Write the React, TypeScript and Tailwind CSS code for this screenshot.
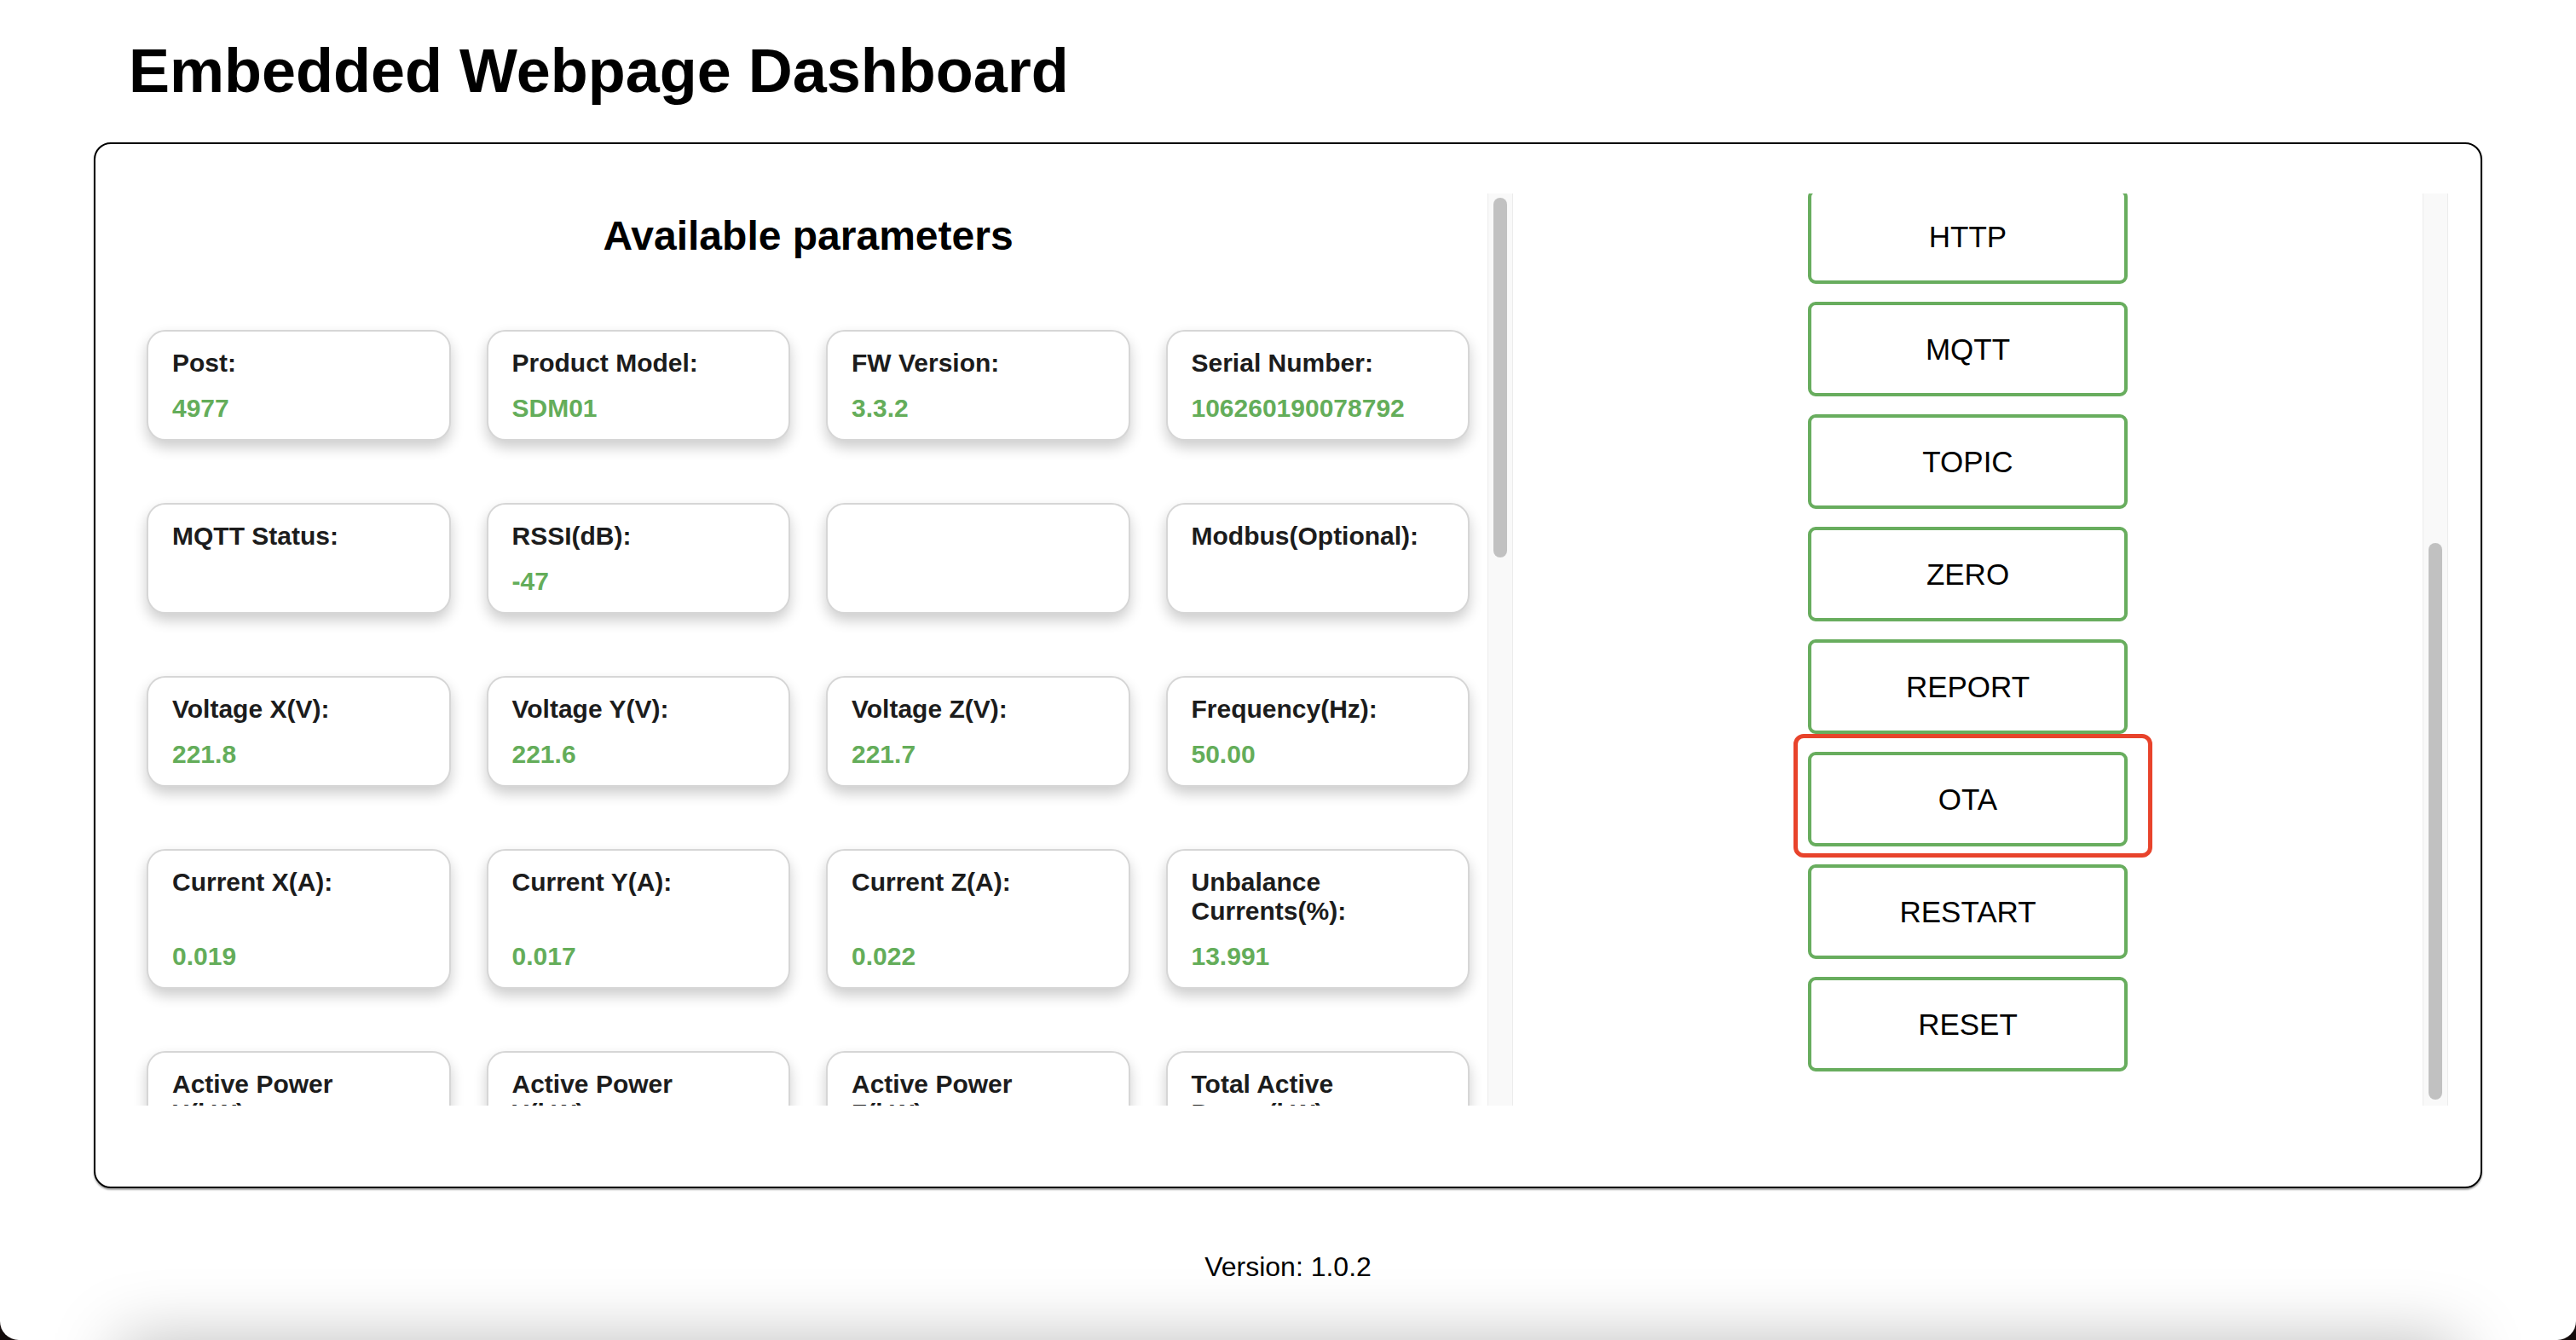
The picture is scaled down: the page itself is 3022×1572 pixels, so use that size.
import React from "react";

type Param = { label: string; value: string };

const params: Param[] = [
  { label: "Post:", value: "4977" },
  { label: "Product Model:", value: "SDM01" },
  { label: "FW Version:", value: "3.3.2" },
  { label: "Serial Number:", value: "106260190078792" },
  { label: "MQTT Status:", value: "" },
  { label: "RSSI(dB):", value: "-47" },
  { label: "", value: "" },
  { label: "Modbus(Optional):", value: "" },
  { label: "Voltage X(V):", value: "221.8" },
  { label: "Voltage Y(V):", value: "221.6" },
  { label: "Voltage Z(V):", value: "221.7" },
  { label: "Frequency(Hz):", value: "50.00" },
  { label: "Current X(A):", value: "0.019" },
  { label: "Current Y(A):", value: "0.017" },
  { label: "Current Z(A):", value: "0.022" },
  { label: "Unbalance Currents(%):", value: "13.991" },
  { label: "Active Power X(kW):", value: "0.000" },
  { label: "Active Power Y(kW):", value: "0.000" },
  { label: "Active Power Z(kW):", value: "0.000" },
  { label: "Total Active Power(kW):", value: "0.000" },
];

const buttons = ["HTTP", "MQTT", "TOPIC", "ZERO", "REPORT", "OTA", "RESTART", "RESET"];

function Card({ p }: { p: Param }) {
  return (
    <div className="flex flex-col justify-between rounded-[22px] border-2 border-[#d6d6d6] bg-white pb-[19px] pl-[28px] pr-[36px] pt-[20px] shadow-[0_8px_16px_rgba(0,0,0,0.2)]">
      <div className="text-[30px] font-bold leading-[34px] text-[#1c1c1c]">{p.label || "\u00a0"}</div>
      <div className="mt-[19px] text-[30px] font-bold leading-[34px] text-[#64ad5a]">{p.value || "\u00a0"}</div>
    </div>
  );
}

function Track({ top, height }: { top: number; height: number }) {
  return (
    <div className="h-full w-[30px] shrink-0 border-x border-[#ececec] bg-[#f9f9f9]">
      <div className="mx-auto w-[16px] rounded-full bg-[#c1c1c1]" style={{ marginTop: top, height }} />
    </div>
  );
}

function ActionButton({ label }: { label: string }) {
  const highlight = label === "OTA";
  return (
    <div className="relative shrink-0">
      <button className="flex h-[111px] w-[375px] items-center justify-center rounded-[9px] border-4 border-[#68ad5e] bg-white text-[35px] leading-none text-black">
        {label}
      </button>
      {highlight && (
        <div className="pointer-events-none absolute bottom-[-13px] left-[-17px] right-[-29px] top-[-21px] rounded-[12px] border-[5px] border-[#e8432b]" />
      )}
    </div>
  );
}

export default function App() {
  return (
    <div className="h-[1572px] w-full bg-[#140c0c]">
      <div className="relative h-full overflow-hidden rounded-b-[22px] bg-white font-['Liberation_Sans',Arial,sans-serif] text-black">
        <h1 className="pl-[151px] pt-[42px] text-[72px] font-bold leading-[83px]">Embedded Webpage Dashboard</h1>

        <div className="mx-[110px] mt-[42px] h-[1227px] rounded-[20px] border-2 border-black pl-[39px] pr-[38px] pt-[58px] shadow-[0_2px_2px_rgba(0,0,0,0.35)]">
          <div className="flex h-[1070px]">
            <div className="flex h-full w-[1624px] shrink-0">
              <div className="h-full flex-1 overflow-hidden px-[21px] pt-[22px]">
                <h2 className="mb-[83px] text-center text-[48px] font-bold leading-[55px]">Available parameters</h2>
                <div className="grid grid-cols-4 gap-x-[42px] gap-y-[73px] pb-[40px]">
                  {params.map((p, i) => (
                    <Card key={i} p={p} />
                  ))}
                </div>
              </div>
              <Track top={5} height={422} />
            </div>

            <div className="flex h-full flex-1">
              <div className="flex h-full flex-1 flex-col items-center justify-end gap-[21px] overflow-hidden pb-[40px]">
                {buttons.map((b) => (
                  <ActionButton key={b} label={b} />
                ))}
              </div>
              <Track top={410} height={653} />
            </div>
          </div>
        </div>

        <p className="mt-[74px] text-center text-[32px] leading-[37px]">Version: 1.0.2</p>

        <div className="pointer-events-none absolute left-[140px] right-[140px] top-full h-[100px] shadow-[0_0_80px_rgba(0,0,0,0.26)]" />
      </div>
    </div>
  );
}
